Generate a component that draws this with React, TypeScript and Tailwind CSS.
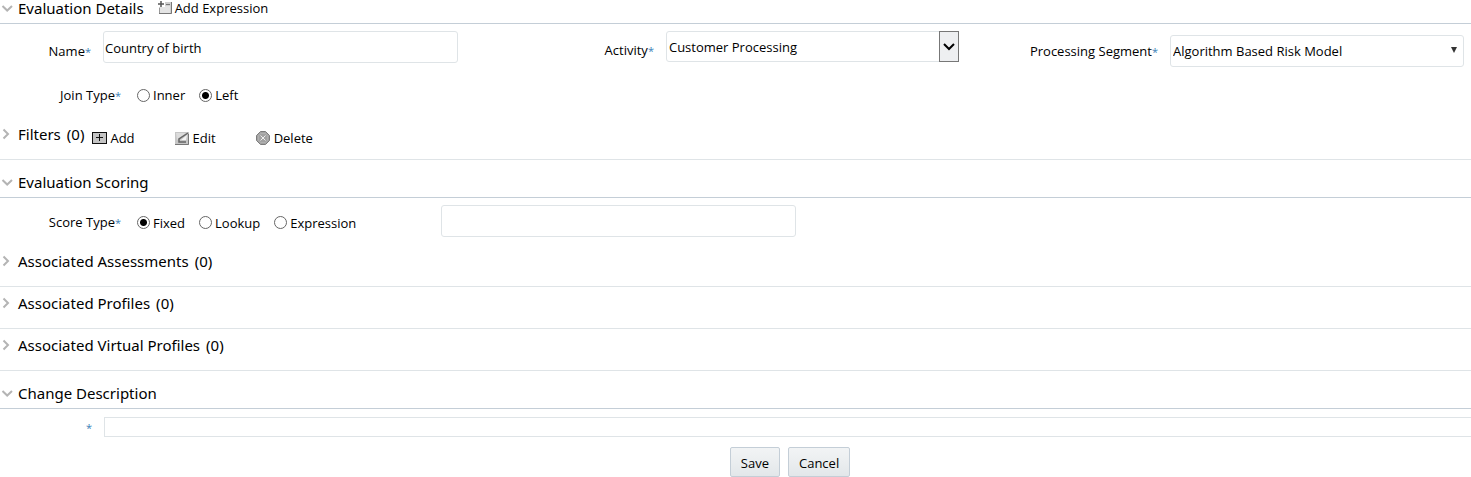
import clsx from "clsx";
import type { ReactNode } from "react";

const Chevron = ({ open }: { open: boolean }) => (
  <svg width="14" height="12" viewBox="0 0 14 12" fill="none" stroke="#b4b4b4" strokeWidth="2" className="shrink-0">
    {open ? <path d="M2.5 4l4.7 4.5L12 4" /> : <path d="M3.500 1.500l4.500 4.500-4.500 4.500" />}
  </svg>
);

const Required = () => <span className="text-[11px] text-[#3c7fb8]">*</span>;

type HeadingProps = {
  title: string;
  count?: number;
  open?: boolean;
  className?: string;
  children?: ReactNode;
};

const Heading = ({ title, count, open = false, className, children }: HeadingProps) => (
  <div
    className={clsx(
      "flex items-center border-b",
      open ? "border-[#c4ced7]" : "border-[#dfe4e7]",
      className
    )}
  >
    <button
      type="button"
      aria-expanded={open}
      className="flex items-center gap-1 font-['Noto_Sans',sans-serif] text-[15px] leading-4"
    >
      <Chevron open={open} />
      <span>{title}</span>
      {count !== undefined && <span className="ml-[2px]">({count})</span>}
    </button>
    {children}
  </div>
);

type RadioProps = {
  name: string;
  label: string;
  checked?: boolean;
};

const Radio = ({ name, label, checked }: RadioProps) => (
  <label className="flex items-center gap-[3px]">
    <input
      type="radio"
      name={name}
      defaultChecked={checked}
      className="size-[13px] appearance-none rounded-full border border-[#666] bg-white checked:bg-[radial-gradient(circle,#000_0_3px,#fff_4px)]"
    />
    {label}
  </label>
);

const AddExpressionIcon = () => (
  <svg width="14" height="14" viewBox="0 0 14 14" className="shrink-0">
    <rect x="1" y="1" width="13" height="12" fill="#cfcfcf" />
    <rect x="2" y="5" width="10" height="7" fill="#e4e4e4" />
    <path d="M1 12.500h12.500V1" fill="none" stroke="#777" />
    <path d="M0 0h7v6H0z" fill="#fff" />
    <path d="M0 3h6M3 0v6" stroke="#555" strokeWidth="1.500" />
    <path d="M8 3.500h4" stroke="#777" />
    <path d="M1.500 7v5" stroke="#999" />
  </svg>
);

const AddIcon = () => (
  <svg width="15" height="12" viewBox="0 0 15 12">
    <rect x=".5" y=".5" width="14" height="11" fill="#c4c4c4" stroke="#111" />
    <path d="M4 5.500h7M7.500 2v7" stroke="#111" />
  </svg>
);

const EditIcon = () => (
  <svg width="14" height="13" viewBox="0 0 14 13">
    <rect width="14" height="13" fill="#c6c6c6" />
    <path d="M0 12.500h13.500V2" fill="none" stroke="#777" />
    <path d="M1 1h10L2 8z" fill="#dcdcdc" />
    <path d="M13 1L4 7v3h7" fill="none" stroke="#666" strokeWidth="1.500" />
    <path d="M12 3L6 8h5z" fill="#f4f4f4" />
  </svg>
);

const DeleteIcon = () => (
  <svg width="14" height="14" viewBox="0 0 14 14">
    <path d="M4.500.5h5l4 4v5l-4 4h-5l-4-4v-5z" fill="#a2a2a2" stroke="#7c7c7c" />
    <path d="M4.500 2.500h5l2 2v5l-2 2h-5l-2-2v-5z" fill="none" stroke="#b0b0b0" />
    <path d="M4.500 4.500l5 5M9.500 4.500l-5 5" stroke="#eee" />
  </svg>
);

const field = "rounded-[3px] border border-[#dfe4e7] bg-white";

export default function App() {
  return (
    <main className="overflow-hidden bg-white font-['Open_Sans',sans-serif] text-[13px] leading-4 text-black">
      <Heading title="Evaluation Details" open className="h-6 pb-[7px]">
        <button type="button" className="ml-[14px] flex items-center gap-[3px]">
          <AddExpressionIcon />
          Add Expression
        </button>
      </Heading>

      <div className="flex items-start justify-between pt-[7px] pr-[7px]">
        <div className="flex w-[458px] items-center">
          <label htmlFor="name" className="w-[91px] pt-2 text-right">
            Name<Required />
          </label>
          <input id="name" defaultValue="Country of birth" className={clsx(field, "ml-3 h-8 flex-1 px-[1px] pt-[2px]")} />
        </div>
        <div className="flex items-start gap-[71px]">
          <div className="flex items-center">
            <label htmlFor="activity" className="pt-2">
              Activity<Required />
            </label>
            <div className="relative ml-3 w-[293px]">
              <select id="activity" className={clsx(field, "block h-[31px] w-full appearance-none px-[2px]")}>
                <option>Customer Processing</option>
              </select>
              <span className="pointer-events-none absolute inset-y-0 right-0 flex w-5 items-center justify-center border border-[#777] bg-[#eeeff1]">
                <svg width="12" height="8" viewBox="0 0 12 8" fill="none" stroke="#000" strokeWidth="2">
                  <path d="M1 1l5 5 5-5" />
                </svg>
              </span>
            </div>
          </div>
          <div className="flex items-center pt-1">
            <label htmlFor="segment">
              Processing Segment<Required />
            </label>
            <div className="relative ml-3 w-[294px]">
              <select id="segment" className={clsx(field, "block h-8 w-full appearance-none px-[2px]")}>
                <option>Algorithm Based Risk Model</option>
              </select>
              <svg width="6" height="6" viewBox="0 0 6 6" className="pointer-events-none absolute top-3 right-[7px]">
                <path d="M0 0h6L3 6z" fill="#333" />
              </svg>
            </div>
          </div>
        </div>
      </div>

      <div role="radiogroup" aria-labelledby="join-type" className="flex h-11 items-center pt-3">
        <span id="join-type" className="w-[121px] text-right">
          Join Type<Required />
        </span>
        <div className="ml-4 flex gap-[14px]">
          <Radio name="join" label="Inner" />
          <Radio name="join" label="Left" checked />
        </div>
      </div>

      <Heading title="Filters" count={0} className="h-[49px] pb-[2px]">
        <div className="flex gap-10 pt-2 pl-2">
          <button type="button" className="flex items-center gap-[3px]">
            <AddIcon />
            Add
          </button>
          <button type="button" className="flex items-center gap-[4px]">
            <EditIcon />
            Edit
          </button>
          <button type="button" className="flex items-center gap-[4px]">
            <DeleteIcon />
            Delete
          </button>
        </div>
      </Heading>

      <Heading title="Evaluation Scoring" open className="h-[38px] pt-[6px]" />

      <div role="radiogroup" aria-labelledby="score-type" className="flex h-[46px] items-center">
        <span id="score-type" className="w-[121px] pt-[3px] text-right">
          Score Type<Required />
        </span>
        <div className="ml-4 flex w-[304px] gap-[14px] pt-[3px]">
          <Radio name="score" label="Fixed" checked />
          <Radio name="score" label="Lookup" />
          <Radio name="score" label="Expression" />
        </div>
        <input aria-label="Score" className={clsx(field, "h-8 w-[355px] px-[2px]")} />
      </div>

      <Heading title="Associated Assessments" count={0} className="h-[43px] pb-2" />
      <Heading title="Associated Profiles" count={0} className="h-[42px] pb-[9px]" />
      <Heading title="Associated Virtual Profiles" count={0} className="h-[42px] pb-[9px]" />
      <Heading title="Change Description" open className="h-[38px] pt-[6px]" />

      <div className="flex items-center pt-2">
        <label htmlFor="change" className="w-[92px] text-right">
          <Required />
        </label>
        <input id="change" className="ml-3 h-5 flex-1 border border-r-0 border-[#dfe4e7] px-[2px]" />
      </div>

      <div className="flex justify-center gap-2 pt-[10px] pl-[109px]">
        {["Save", "Cancel"].map((label) => (
          <button
            key={label}
            type="button"
            className="h-[30px] rounded-[2px] border border-[#c4ced7] bg-linear-to-b from-[#f2f4f5] to-[#e3e7ea] px-[10px] pt-[2px]"
          >
            {label}
          </button>
        ))}
      </div>
    </main>
  );
}
